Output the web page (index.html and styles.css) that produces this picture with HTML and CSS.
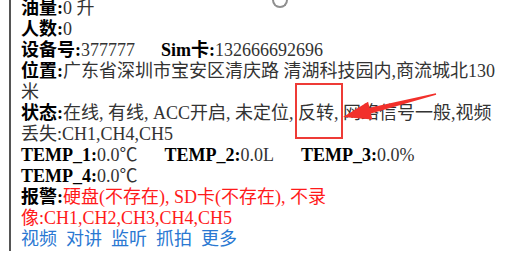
FILE: index.html
```html
<!DOCTYPE html>
<html lang="zh-CN">
<head>
<meta charset="utf-8">
<title>设备信息</title>
<link rel="stylesheet" href="styles.css">
</head>
<body>
<div class="panel">
  <div class="info">
    <div class="row"><b class="lbl">油量:</b><span class="val">0 升</span></div>
    <div class="row"><b class="lbl">人数:</b><span class="val">0</span></div>
    <div class="row"><b class="lbl">设备号:</b><span class="val">377777</span><b class="lbl sim">Sim卡:</b><span class="val">132666692696</span></div>
    <div class="row"><b class="lbl">位置:</b><span class="val">广东省深圳市宝安区清庆路 清湖科技园内,商流城北130米</span></div>
    <div class="row"><b class="lbl">状态:</b><span class="val">在线, 有线, ACC开启, 未定位, 反转, 网络信号一般,视频丢失:CH1,CH4,CH5</span></div>
    <div class="row temps">
      <span class="temp"><b class="lbl">TEMP_1:</b><span class="val">0.0℃</span></span>
      <span class="temp"><b class="lbl">TEMP_2:</b><span class="val">0.0L</span></span>
      <span class="temp"><b class="lbl">TEMP_3:</b><span class="val">0.0%</span></span>
      <span class="temp"><b class="lbl">TEMP_4:</b><span class="val">0.0℃</span></span>
    </div>
    <div class="row"><b class="lbl">报警:</b><span class="alarm">硬盘(不存在), SD卡(不存在), 不录像:CH1,CH2,CH3,CH4,CH5</span></div>
    <div class="row actions">
      <a class="act">视频</a><a class="act">对讲</a><a class="act">监听</a><a class="act">抓拍</a><a class="act">更多</a>
    </div>
  </div>
</div>
<div class="spinner"></div>
<div class="mark-box"></div>
<svg class="arrow" width="520" height="253" viewBox="0 0 520 253">
  <polygon points="343,117 368.1,101.8 369.5,107.7 435.8,93.2 436.2,94.8 370.9,113.5 372.3,119.4" fill="#f2302b"/>
</svg>
</body>
</html>
```
FILE: styles.css
```css
html, body {
  margin: 0;
  padding: 0;
  background: #ffffff;
  overflow: hidden;
}
body {
  width: 520px;
  height: 253px;
  position: relative;
}
.panel {
  margin-left: 9px;
  height: 253px;
  border-left: 2px solid #555555;
  padding-left: 10px;
}
.info {
  width: 488px;
  margin-top: -2px;
  font-family: "Liberation Serif", "Noto Sans CJK SC", serif;
  font-size: 18px;
  line-height: 21px;
  color: #333333;
}
.lbl {
  font-weight: bold;
  color: #000000;
}
.val {
  color: #333333;
}
.sim {
  margin-left: 26px;
}
.temps {
  display: flex;
  flex-wrap: wrap;
  column-gap: 27px;
}
.alarm {
  color: #ff1a1a;
}
.actions {
  display: flex;
  column-gap: 9px;
}
.act {
  color: #2a78d2;
  cursor: pointer;
}
.spinner {
  position: absolute;
  left: 272px;
  top: -8px;
  width: 12px;
  height: 12px;
  border: 2px solid #8f8f8f;
  border-top-color: #d8d8d8;
  border-radius: 50%;
}
.mark-box {
  position: absolute;
  left: 295px;
  top: 83px;
  width: 44px;
  height: 52px;
  border: 2px solid #ee3b36;
}
.arrow {
  position: absolute;
  left: 0;
  top: 0;
}
```
